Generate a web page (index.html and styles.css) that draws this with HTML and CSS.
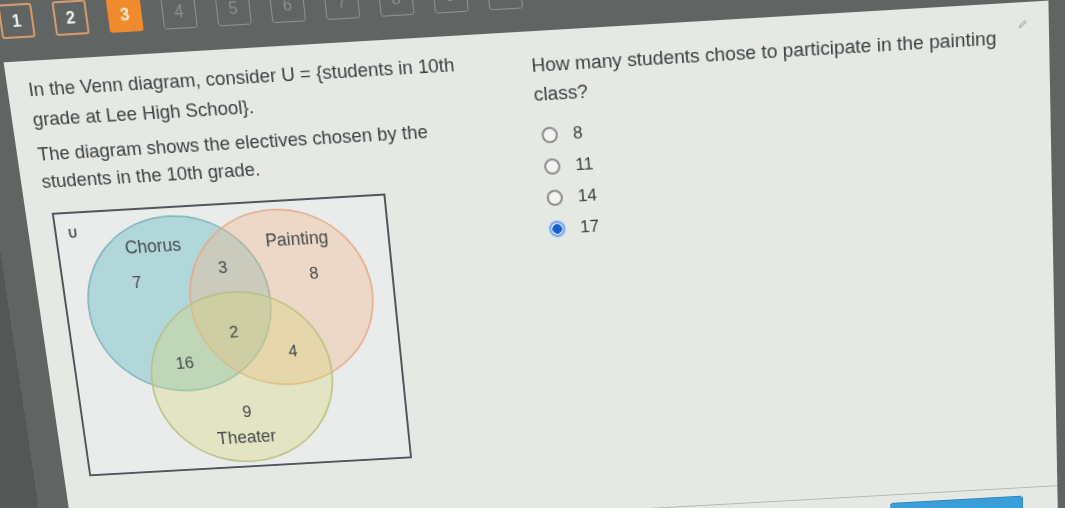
FILE: index.html
```html
<!DOCTYPE html>
<html lang="en">
<head>
    <meta charset="UTF-8">
    <meta name="viewport" content="width=device-width, initial-scale=1.0">
    <title>Venn diagram question</title>
    <link rel="stylesheet" href="styles.css">
</head>
<body>
    <div class="screen">
        <div class="question-nav">
            <a href="#" class="q-btn done">1</a>
            <a href="#" class="q-btn done">2</a>
            <a href="#" class="q-btn current">3</a>
            <a href="#" class="q-btn">4</a>
            <a href="#" class="q-btn">5</a>
            <a href="#" class="q-btn">6</a>
            <a href="#" class="q-btn">7</a>
            <a href="#" class="q-btn">8</a>
            <a href="#" class="q-btn">9</a>
            <a href="#" class="q-btn">10</a>
        </div>

        <div class="panel">
            <div class="panel-body">
                <div class="stem">
                    <p class="intro">In the Venn diagram, consider U = {students in 10th grade at Lee High School}.</p>
                    <p>The diagram shows the electives chosen by the students in the 10th grade.</p>
                    <svg class="venn" width="334" height="272" viewBox="0 0 334 272" xmlns="http://www.w3.org/2000/svg">
                        <rect x="1" y="1" width="332" height="270" fill="#e9eceb" stroke="#51575a" stroke-width="2"/>
                        <ellipse cx="115.6" cy="98.9" rx="92" ry="89" fill="rgba(110,190,200,0.45)" stroke="#79b2b9" stroke-width="1.5"/>
                        <ellipse cx="219" cy="98.4" rx="92" ry="89" fill="rgba(245,180,138,0.37)" stroke="#e2a987" stroke-width="1.5"/>
                        <ellipse cx="169.5" cy="177.7" rx="92" ry="88" fill="rgba(215,215,120,0.35)" stroke="#b7bf7f" stroke-width="1.5"/>
                        <text x="18" y="26.5" class="u-label">U</text>
                        <text x="96.4" y="45" class="set-label">Chorus</text>
                        <text x="241" y="46.3" class="set-label">Painting</text>
                        <text x="167" y="246.2" class="set-label">Theater</text>
                        <text x="75.6" y="80" class="count">7</text>
                        <text x="163.7" y="69.8" class="count">3</text>
                        <text x="254.3" y="81.2" class="count">8</text>
                        <text x="166.9" y="136.3" class="count">2</text>
                        <text x="224.3" y="159.2" class="count">4</text>
                        <text x="113.3" y="165.3" class="count">16</text>
                        <text x="170.3" y="218.7" class="count">9</text>
                    </svg>
                </div>

                <div class="prompt">
                    <span class="notes-icon">
                        <svg width="9" height="8" viewBox="0 0 9 8" xmlns="http://www.w3.org/2000/svg">
                            <path d="M1 7 L2 4.8 L6.6 1 L8 2.3 L3.4 6.1 Z" fill="none" stroke="#9b9d9b" stroke-width="1"/>
                        </svg>
                    </span>
                    <p>How many students chose to participate in the painting class?</p>
                    <div class="options">
                        <label class="option"><input type="radio" name="answer"> 8</label>
                        <label class="option"><input type="radio" name="answer"> 11</label>
                        <label class="option"><input type="radio" name="answer"> 14</label>
                        <label class="option"><input type="radio" name="answer" checked> 17</label>
                    </div>
                </div>
            </div>
            <div class="panel-footer">
                <button class="next-btn">Next</button>
            </div>
        </div>
    </div>
</body>
</html>
```

FILE: styles.css
```css
html, body {
    margin: 0;
    height: 100%;
}
body {
    background: #545756;
    overflow: hidden;
    font-family: "Liberation Sans", Arial, sans-serif;
}
/* the screen was photographed at an angle: tilt + keystone */
.screen {
    width: 1100px;
    height: 610px;
    background: #606462;
    transform-origin: 1200px 250px;
    transform: perspective(1000px) rotateX(-7.125deg) translateY(-69.2px) skewY(-3.3deg);
}
.question-nav {
    display: flex;
    gap: 20px;
    height: 67px;
    padding: 12px 0 0 33px;
    box-sizing: border-box;
}
.q-btn {
    width: 33px;
    height: 33px;
    box-sizing: border-box;
    display: flex;
    align-items: center;
    justify-content: center;
    border: 1px solid #8d918f;
    border-radius: 3px;
    color: #8d918f;
    font-size: 16px;
    text-decoration: none;
}
.q-btn.done {
    border: 2px solid #d39a6c;
    color: #f2f2f0;
    font-weight: bold;
}
.q-btn.current {
    background: #f08b2d;
    border: 2px solid #f08b2d;
    color: #fdeede;
    font-weight: bold;
}
.panel {
    margin-left: 31px;
    width: 1022px;
    height: 560px;
    background: #e6e8e4;
    display: flex;
    flex-direction: column;
}
.panel-body {
    display: flex;
    gap: 55px;
    height: 487.5px;
    box-sizing: border-box;
    padding: 13px 21.5px 0 20.5px;
    color: #3d4041;
}
.stem {
    width: 440px;
    flex-shrink: 0;
}
.stem p {
    margin: 0 0 6px;
    font-size: 18.4px;
    line-height: 27px;
}
.stem p.intro {
    line-height: 29px;
}
.venn {
    display: block;
    margin: 18px 0 0 5.5px;
    font-family: "Liberation Sans", Arial, sans-serif;
}
.venn text {
    fill: #45494a;
    text-anchor: middle;
}
.venn .set-label {
    font-size: 17.5px;
}
.venn .count {
    font-size: 16.5px;
}
.venn .u-label {
    font-size: 12px;
    font-weight: bold;
}
.prompt {
    width: 485px;
    flex-shrink: 0;
    margin-top: 6px;
    position: relative;
}
.prompt p {
    margin: 0;
    width: 470px;
    font-size: 18.8px;
    line-height: 28px;
}
.notes-icon {
    position: absolute;
    top: -8px;
    right: 0;
}
.options {
    margin-top: 10px;
}
.option {
    display: flex;
    align-items: center;
    gap: 15.5px;
    height: 31px;
    padding-left: 4px;
    font-size: 17px;
    cursor: pointer;
}
.option input {
    appearance: none;
    -webkit-appearance: none;
    width: 16px;
    height: 16px;
    margin: 0;
    box-sizing: border-box;
    border: 2px solid #8b8e8d;
    border-radius: 50%;
    background: #f3f4f2;
}
.option input:checked {
    border-color: #78a8ee;
    box-shadow: 0 0 0 1px #c2d7f4;
    background: radial-gradient(circle, #155fd6 0 4.5px, #e2ebf8 5px);
}
.panel-footer {
    display: flex;
    justify-content: flex-end;
    border-top: 1px solid #b4b7b3;
    padding: 8px 36px 0 0;
}
.next-btn {
    width: 137px;
    height: 36px;
    background: #3a9fd8;
    border: 1px solid #2d86bd;
    border-radius: 3px;
    color: #fff;
    font-size: 16px;
    font-family: inherit;
}
```
